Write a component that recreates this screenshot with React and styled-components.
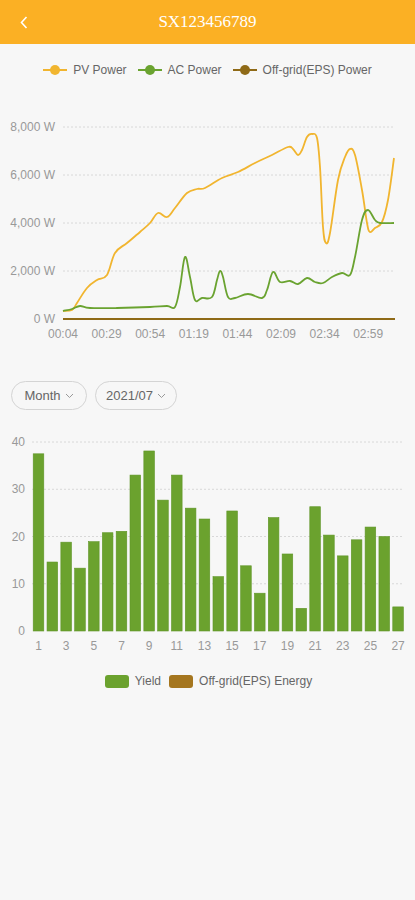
import React from "react";
import styled, { createGlobalStyle } from "styled-components";

const GlobalStyle = createGlobalStyle`
  * { box-sizing: border-box; }
  body {
    margin: 0;
    background: #f7f7f7;
    font-family: "Liberation Sans", Arial, sans-serif;
  }
`;

const YELLOW = "#f1b52f";
const GREEN = "#6aa330";
const BROWN = "#8f6a17";

const pv = [
  [63, 311], [72, 310], [77, 303], [87, 288], [97, 280], [107, 275], [115, 253],
  [127, 243], [140, 232], [150, 223], [158, 213], [167, 217], [175, 208],
  [187, 193], [197, 189], [205, 188], [222, 178], [238, 172], [255, 163],
  [272, 155], [288, 147], [293, 149], [298, 155], [302, 150], [307, 137],
  [312, 134], [317, 138], [320, 167], [323, 227], [326, 243], [330, 233],
  [338, 180], [345, 157], [350, 149], [355, 155], [362, 190], [367, 223],
  [370, 232], [375, 228], [382, 222], [388, 200], [394, 158],
];

const ac = [
  [63, 311], [72, 309], [80, 306], [90, 308], [117, 308], [150, 307],
  [167, 306], [175, 307], [180, 287], [185, 257], [190, 277], [195, 300],
  [202, 298], [212, 297], [217, 280], [220, 271], [223, 277], [228, 297],
  [235, 298], [248, 294], [262, 298], [267, 290], [273, 272], [280, 282],
  [290, 281], [298, 284], [307, 278], [315, 282], [323, 283], [332, 277],
  [342, 273], [350, 275], [355, 257], [362, 220], [368, 210], [375, 220],
  [380, 223], [394, 223],
];

const yields = [
  37.5, 14.6, 18.8, 13.3, 18.9, 20.8, 21.1, 33, 38.1, 27.7, 33, 26, 23.7,
  11.5, 25.4, 13.8, 8, 24, 16.3, 4.8, 26.3, 20.3, 15.9, 19.3, 22, 20, 5.1,
];

// smooth path through points (catmull-rom -> bezier)
function smooth(pts) {
  let d = `M${pts[0][0]},${pts[0][1]}`;
  for (let i = 0; i < pts.length - 1; i++) {
    const p0 = pts[i - 1] || pts[i];
    const p1 = pts[i];
    const p2 = pts[i + 1];
    const p3 = pts[i + 2] || p2;
    const t = 0.18;
    const c1x = p1[0] + (p2[0] - p0[0]) * t;
    const c1y = p1[1] + (p2[1] - p0[1]) * t;
    const c2x = p2[0] - (p3[0] - p1[0]) * t;
    const c2y = p2[1] - (p3[1] - p1[1]) * t;
    d += ` C${c1x.toFixed(1)},${c1y.toFixed(1)} ${c2x.toFixed(1)},${c2y.toFixed(1)} ${p2[0]},${p2[1]}`;
  }
  return d;
}

const Page = styled.div`
  width: 415px;
  min-height: 900px;
  background: #f7f7f7;
`;

const Header = styled.header`
  height: 44px;
  background: #fbb024;
  display: flex;
  align-items: center;
  justify-content: center;
  position: relative;
`;

const Back = styled.button`
  position: absolute;
  left: 14px;
  top: 12px;
  width: 20px;
  height: 20px;
  padding: 0;
  border: none;
  background: none;
  display: flex;
  align-items: center;
  justify-content: center;
`;

const Title = styled.h1`
  margin: 0;
  font-family: "Liberation Serif", "Times New Roman", serif;
  font-weight: normal;
  font-size: 17px;
  color: #ffffff;
`;

const Legend = styled.div`
  height: ${(p) => p.h}px;
  display: flex;
  align-items: center;
  justify-content: center;
  gap: ${(p) => p.gap}px;
  padding-left: ${(p) => p.shift || 0}px;
`;

const LegendItem = styled.div`
  display: flex;
  align-items: center;
  font-size: 12px;
  color: #666;
  gap: 6px;
`;

const LineMark = styled.span`
  position: relative;
  width: 24px;
  height: 2px;
  background: ${(p) => p.c};
  &::after {
    content: "";
    position: absolute;
    left: 7px;
    top: -4px;
    width: 10px;
    height: 10px;
    border-radius: 50%;
    background: ${(p) => p.c};
  }
`;

const BoxMark = styled.span`
  width: 24px;
  height: 13px;
  border-radius: 3px;
  background: ${(p) => p.c};
`;

const Chart = styled.svg`
  display: block;
  font-family: "Liberation Sans", Arial, sans-serif;
`;

const Selectors = styled.div`
  display: flex;
  gap: 8px;
  padding: 27px 0 0 11px;
`;

const Pill = styled.div`
  width: ${(p) => p.w}px;
  height: 29px;
  border: 1px solid #d4d4d4;
  border-radius: 15px;
  display: flex;
  align-items: center;
  justify-content: center;
  gap: 4px;
  font-size: 13px;
  color: #666;
`;

const Chevron = () => (
  <svg width="9" height="6" viewBox="0 0 9 6">
    <path d="M1 1 L4.5 4.5 L8 1" fill="none" stroke="#999" strokeWidth="1" />
  </svg>
);

function LineChart() {
  const grid = [127, 175, 223, 271];
  const yl = ["8,000 W", "6,000 W", "4,000 W", "2,000 W", "0 W"];
  const xl = ["00:04", "00:29", "00:54", "01:19", "01:44", "02:09", "02:34", "02:59"];
  return (
    <Chart width="415" height="258" viewBox="0 96 415 258">
      {grid.map((y) => (
        <line key={y} x1="63" x2="395" y1={y} y2={y} stroke="#d8d8d8" strokeWidth="1" strokeDasharray="2 2" />
      ))}
      {yl.map((t, i) => (
        <text key={t} x="55" y={127 + i * 48 + 4} textAnchor="end" fontSize="12" fill="#999">
          {t}
        </text>
      ))}
      {xl.map((t, i) => (
        <text key={t} x={63 + i * 43.6} y="338" textAnchor="middle" fontSize="12" fill="#999">
          {t}
        </text>
      ))}
      <path d={smooth(pv)} fill="none" stroke={YELLOW} strokeWidth="1.8" />
      <path d={smooth(ac)} fill="none" stroke={GREEN} strokeWidth="1.8" />
      <line x1="63" x2="395" y1="319" y2="319" stroke={BROWN} strokeWidth="2" />
    </Chart>
  );
}

function BarChart() {
  const base = 631;
  const unit = 4.725;
  const pitch = 13.83;
  return (
    <Chart width="415" height="250" viewBox="0 410 415 250">
      {[40, 30, 20, 10].map((v) => (
        <line key={v} x1="32" x2="404" y1={base - v * unit} y2={base - v * unit} stroke="#d8d8d8" strokeWidth="1" strokeDasharray="2 2" />
      ))}
      {[40, 30, 20, 10, 0].map((v) => (
        <text key={v} x="25" y={base - v * unit + 4} textAnchor="end" fontSize="12" fill="#999">
          {v}
        </text>
      ))}
      {yields.map((v, i) => {
        const cx = 38.5 + i * pitch;
        return (
          <rect key={i} x={cx - 5.3} y={base - v * unit} width="10.6" height={v * unit} fill="#6ba22e" stroke="#5f9527" strokeWidth="0.6" />
        );
      })}
      {yields.map((v, i) =>
        i % 2 === 0 ? (
          <text key={i} x={38.5 + i * pitch} y="650" textAnchor="middle" fontSize="12" fill="#999">
            {i + 1}
          </text>
        ) : null
      )}
    </Chart>
  );
}

export default function App() {
  return (
    <Page>
      <GlobalStyle />
      <Header>
        <Back aria-label="back">
          <svg width="8" height="13" viewBox="0 0 8 13">
            <path d="M6.5 1 L1.5 6.5 L6.5 12" fill="none" stroke="#fff" strokeWidth="1.6" />
          </svg>
        </Back>
        <Title>SX123456789</Title>
      </Header>
      <Legend h={52} gap={11}>
        <LegendItem>
          <LineMark c={YELLOW} />
          PV Power
        </LegendItem>
        <LegendItem>
          <LineMark c={GREEN} />
          AC Power
        </LegendItem>
        <LegendItem>
          <LineMark c={BROWN} />
          Off-grid(EPS) Power
        </LegendItem>
      </Legend>
      <LineChart />
      <Selectors>
        <Pill w={76}>
          Month <Chevron />
        </Pill>
        <Pill w={82}>
          2021/07 <Chevron />
        </Pill>
      </Selectors>
      <BarChart />
      <Legend h={42} gap={8} shift={2}>
        <LegendItem>
          <BoxMark c="#6ba22e" />
          Yield
        </LegendItem>
        <LegendItem>
          <BoxMark c="#a5761f" />
          Off-grid(EPS) Energy
        </LegendItem>
      </Legend>
    </Page>
  );
}
